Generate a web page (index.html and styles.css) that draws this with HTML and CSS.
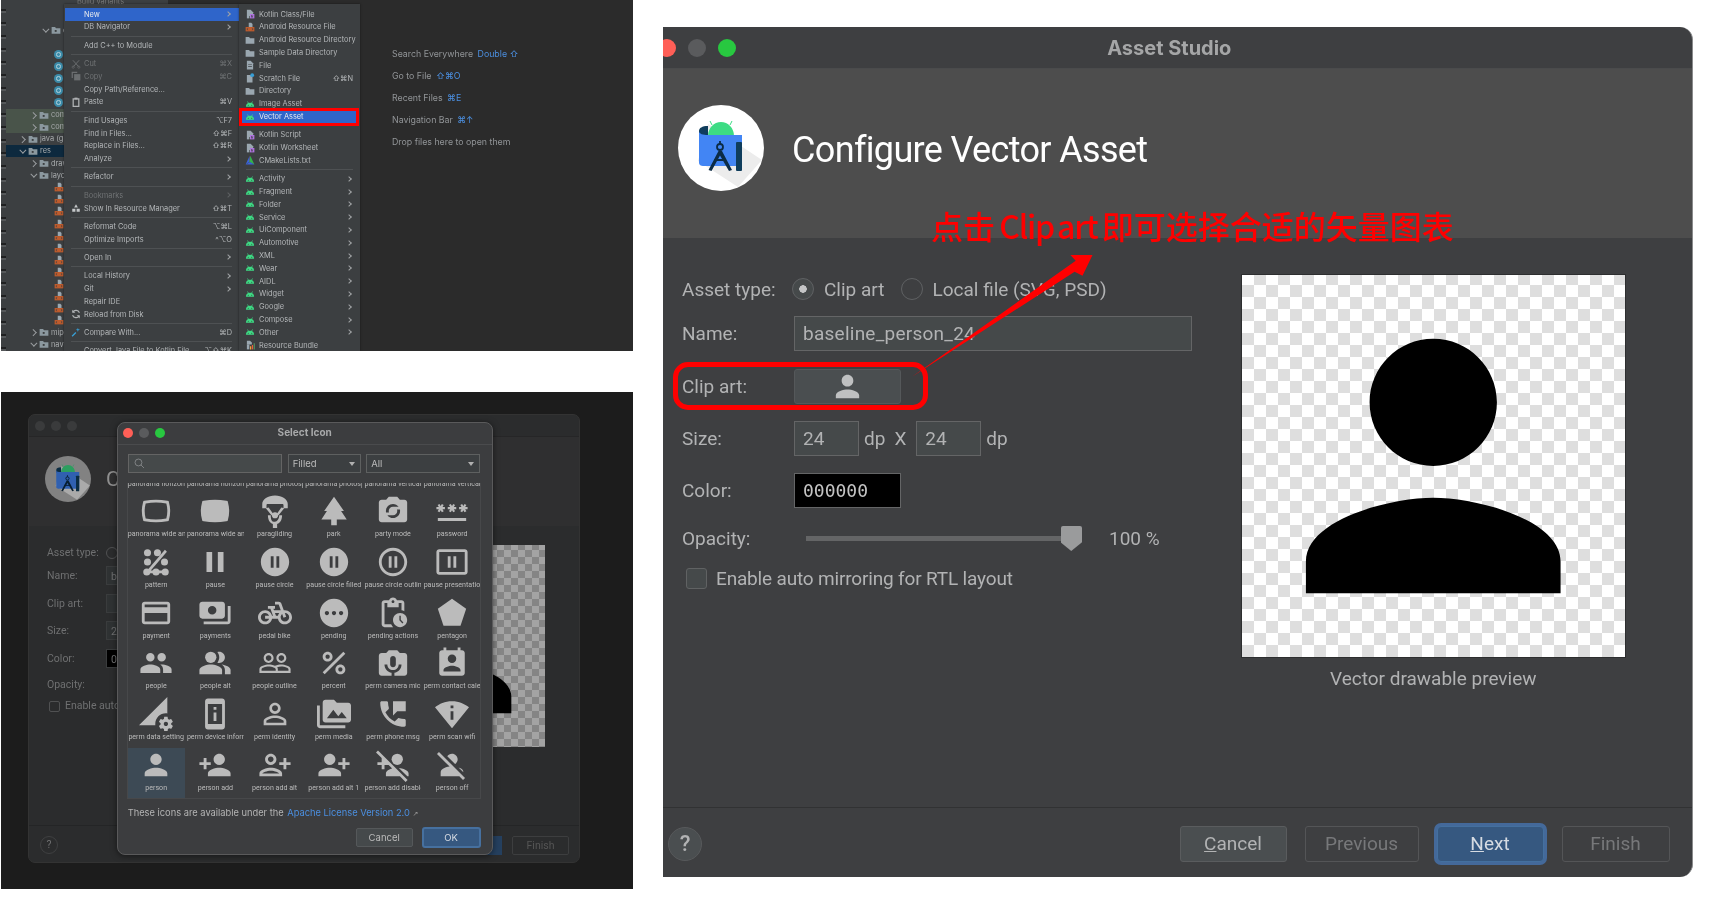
FILE: index.html
```html
<!DOCTYPE html>
<html lang="en">
<head>
    <meta charset="UTF-8">
    <title>Configure Vector Asset</title>
    <link rel="stylesheet" href="styles.css">
</head>
<body>
    <svg class="sprites" width="0" height="0">
        <symbol id="i-android" viewBox="0 0 16 16"><path fill="#3ddc84" d="M1.5 12.5a6.5 6.5 0 0 1 13 0z"/><path stroke="#3ddc84" stroke-width="1.2" d="M4 4l1.5 2.5M12 4l-1.5 2.5"/><circle cx="5.2" cy="10" r=".8" fill="#3c3f41"/><circle cx="10.8" cy="10" r=".8" fill="#3c3f41"/></symbol>
        <symbol id="i-folder" viewBox="0 0 16 16"><path fill="#9aa7b0" d="M1 3h5.5L8 5h7v9H1z"/></symbol>
        <symbol id="i-tfolder" viewBox="0 0 16 16"><path fill="#8b989f" d="M1 3h5.5L8 5h7v9H1z"/><rect x="6" y="8" width="3" height="3" fill="#3c3f41"/></symbol>
        <symbol id="i-file" viewBox="0 0 16 16"><path fill="#9aa7b0" d="M3 1h6l4 4v10H3z"/><path fill="#3c3f41" d="M5 7h6v1H5zM5 10h6v1H5z"/></symbol>
        <symbol id="i-kotlin" viewBox="0 0 16 16"><path fill="#9aa7b0" d="M3 1h6l4 4v6H3z"/><path fill="#9aa7b0" d="M3 11h4v4H3z"/><path fill="#b074e0" d="M8 8h7v7H8z"/><path fill="#3c3f41" d="M10 9.500h1v4h-1zM11 11.500l2-2v1l-1 1 1 2h-1z"/></symbol>
        <symbol id="i-xml" viewBox="0 0 16 16"><path fill="#9aa7b0" d="M6 1h4l2 2v5H6z"/><rect x="1" y="8" width="14" height="7" fill="#bd5b2d"/><path stroke="#3c3f41" fill="none" d="M5 10l-2 1.500L5 13M11 10l2 1.500L11 13"/></symbol>
        <symbol id="i-scratch" viewBox="0 0 16 16"><path fill="#9aa7b0" d="M3 3h6l3 3v9H3z"/><circle cx="11.500" cy="3.500" r="3" fill="#389fd6"/></symbol>
        <symbol id="i-cmake" viewBox="0 0 16 16"><path fill="#e23b3b" d="M8 1l-1 9 3 1z"/><path fill="#3a63d8" d="M7.500 1L1 15l6-4z"/><path fill="#34b24c" d="M8.500 1L15 15 7 11z"/><path fill="#3a63d8" d="M8 11L1 15h14z"/></symbol>
        <symbol id="i-bundle" viewBox="0 0 16 16"><path fill="#9aa7b0" d="M3 1h5l3 3v3H3z"/><path fill="#9aa7b0" d="M3 7h4v8H3z"/><path fill="#f2a43a" d="M8 10h2v5H8z"/><path fill="#e85d3a" d="M11 8h2v7h-2z"/><path fill="#59a869" d="M14 5h1.500v10H14z"/></symbol>
        <symbol id="i-person" viewBox="0 0 24 24"><path d="M12 12c2.210 0 4-1.790 4-4s-1.790-4-4-4-4 1.790-4 4 1.790 4 4 4zm0 2c-2.670 0-8 1.340-8 4v2h16v-2c0-2.660-5.330-4-8-4z"/></symbol>
        <symbol id="i-studio" viewBox="0 0 86 86">
            <path fill="#ececec" d="M30 19l54 36-24 27L20 56z"/>
            <path fill="#3ddc84" d="M30 31c0-8 6-14 13-14s13 6 13 14z"/>
            <path stroke="#3ddc84" stroke-width="1" d="M34 20l-2-4M52 20l2-4"/>
            <path fill="#0f3d5c" d="M21 26c0-3 3-5 9-5v10h-9z"/>
            <path fill="#4285f4" d="M21 26c0 3 4 4 9 4h34v31H25c-2 0-4-1-4-3z"/>
            <rect x="58" y="37" width="6" height="29" rx="1" fill="#0f3d5c"/>
            <path fill="#0b2b45" d="M40.500 46l-10 19 3 1 8.500-15.500L51 66l3-1-10-19z"/>
            <circle cx="42" cy="42" r="3" fill="none" stroke="#0b2b45" stroke-width="1.800"/>
            <path stroke="#0b2b45" stroke-width="1.800" d="M42 36v3M36 55h12"/>
        </symbol>
    </svg>

    <div class="page">
        <div class="left-col">
            <div class="ide">
                <div class="top-strip"><span>Build variants</span></div>
                <div class="tool-strip"></div>
                <div class="tree">
                    <div class="tree-row lv2"><i class="t-chev open"></i><svg class="t-ico"><use href="#i-tfolder"/></svg>com</div>
                    <div class="tree-row"></div>
                    <div class="tree-row lv3"><span class="c-badge"></span></div>
                    <div class="tree-row lv3"><span class="c-badge"></span></div>
                    <div class="tree-row lv3"><span class="c-badge"></span></div>
                    <div class="tree-row lv3"><span class="c-badge"></span></div>
                    <div class="tree-row lv3"><span class="c-badge"></span></div>
                    <div class="tree-row lv1b olive"><i class="t-chev"></i><svg class="t-ico"><use href="#i-tfolder"/></svg>com</div>
                    <div class="tree-row lv1b olive"><i class="t-chev"></i><svg class="t-ico"><use href="#i-tfolder"/></svg>com</div>
                    <div class="tree-row lv0"><i class="t-chev"></i><svg class="t-ico"><use href="#i-tfolder"/></svg>java (g</div>
                    <div class="tree-row lv0 picked"><i class="t-chev open"></i><svg class="t-ico"><use href="#i-tfolder"/></svg>res</div>
                    <div class="tree-row lv1b"><i class="t-chev"></i><svg class="t-ico"><use href="#i-tfolder"/></svg>drawable</div>
                    <div class="tree-row lv1b"><i class="t-chev open"></i><svg class="t-ico"><use href="#i-tfolder"/></svg>layout</div>
                    <div class="tree-row lv3"><svg class="t-ico"><use href="#i-xml"/></svg></div>
                    <div class="tree-row lv3"><svg class="t-ico"><use href="#i-xml"/></svg></div>
                    <div class="tree-row lv3"><svg class="t-ico"><use href="#i-xml"/></svg></div>
                    <div class="tree-row lv3"><svg class="t-ico"><use href="#i-xml"/></svg></div>
                    <div class="tree-row lv3"><svg class="t-ico"><use href="#i-xml"/></svg></div>
                    <div class="tree-row lv3"><svg class="t-ico"><use href="#i-xml"/></svg></div>
                    <div class="tree-row lv3"><svg class="t-ico"><use href="#i-xml"/></svg></div>
                    <div class="tree-row lv3"><svg class="t-ico"><use href="#i-xml"/></svg></div>
                    <div class="tree-row lv3"><svg class="t-ico"><use href="#i-xml"/></svg></div>
                    <div class="tree-row lv3"><svg class="t-ico"><use href="#i-xml"/></svg></div>
                    <div class="tree-row lv3"><svg class="t-ico"><use href="#i-xml"/></svg></div>
                    <div class="tree-row lv3"><svg class="t-ico"><use href="#i-xml"/></svg></div>
                    <div class="tree-row lv1b"><i class="t-chev"></i><svg class="t-ico"><use href="#i-tfolder"/></svg>mipmap</div>
                    <div class="tree-row lv1b"><i class="t-chev open"></i><svg class="t-ico"><use href="#i-tfolder"/></svg>navigation</div>
                </div>

                <div class="menu">
                    <div class="item active"><span class="ico"></span>New<i class="chev"></i></div>
                    <div class="item"><span class="ico"></span>DB Navigator<i class="chev"></i></div>
                    <div class="sep"></div>
                    <div class="item"><span class="ico"></span>Add C++ to Module</div>
                    <div class="sep"></div>
                    <div class="item off"><span class="ico"><svg class="m-ico" viewBox="0 0 16 16"><path fill="none" stroke="#6b6e70" stroke-width="1.500" d="M3 2l9 10M13 2L4 12"/><circle cx="3.500" cy="13" r="1.800" fill="none" stroke="#6b6e70"/><circle cx="12.500" cy="13" r="1.800" fill="none" stroke="#6b6e70"/></svg></span>Cut<span class="keys">⌘X</span></div>
                    <div class="item off"><span class="ico"><svg class="m-ico" viewBox="0 0 16 16"><path fill="#6b6e70" d="M1 1h9v2H3v8H1z"/><path fill="#6b6e70" d="M5 5h10v10H5z"/></svg></span>Copy<span class="keys">⌘C</span></div>
                    <div class="item"><span class="ico"></span>Copy Path/Reference...</div>
                    <div class="item"><span class="ico"><svg class="m-ico" viewBox="0 0 16 16"><path fill="none" stroke="#b0b3b5" stroke-width="2" d="M3.500 3h9v12h-9z"/><path fill="#b0b3b5" d="M5.500 1h5v3h-5z"/></svg></span>Paste<span class="keys">⌘V</span></div>
                    <div class="sep"></div>
                    <div class="item"><span class="ico"></span>Find Usages<span class="keys">⌥F7</span></div>
                    <div class="item"><span class="ico"></span>Find in Files...<span class="keys">⇧⌘F</span></div>
                    <div class="item"><span class="ico"></span>Replace in Files...<span class="keys">⇧⌘R</span></div>
                    <div class="item"><span class="ico"></span>Analyze<i class="chev"></i></div>
                    <div class="sep"></div>
                    <div class="item"><span class="ico"></span>Refactor<i class="chev"></i></div>
                    <div class="sep"></div>
                    <div class="item off"><span class="ico"></span>Bookmarks<i class="chev"></i></div>
                    <div class="item"><span class="ico"><svg class="m-ico" viewBox="0 0 16 16"><path fill="#c4c7c9" d="M8 2l3 5H5zM2 9h5v5H2zM9 9h5v5H9z"/></svg></span>Show In Resource Manager<span class="keys">⇧⌘T</span></div>
                    <div class="sep"></div>
                    <div class="item"><span class="ico"></span>Reformat Code<span class="keys">⌥⌘L</span></div>
                    <div class="item"><span class="ico"></span>Optimize Imports<span class="keys">^⌥O</span></div>
                    <div class="sep"></div>
                    <div class="item"><span class="ico"></span>Open In<i class="chev"></i></div>
                    <div class="sep"></div>
                    <div class="item"><span class="ico"></span>Local History<i class="chev"></i></div>
                    <div class="item"><span class="ico"></span>Git<i class="chev"></i></div>
                    <div class="item"><span class="ico"></span>Repair IDE</div>
                    <div class="item"><span class="ico"><svg class="m-ico" viewBox="0 0 16 16"><path fill="none" stroke="#b0b3b5" stroke-width="1.800" d="M13.500 6A6 6 0 0 0 2.800 5M2.500 10a6 6 0 0 0 10.700 1"/><path fill="#b0b3b5" d="M2 1v5h5zM14 15v-5H9z"/></svg></span>Reload from Disk</div>
                    <div class="sep"></div>
                    <div class="item"><span class="ico"><svg class="m-ico" viewBox="0 0 16 16"><path fill="#389fd6" d="M1 14L7 8l1.500 1.500-6 6zM11 1l.8 2.700 2.700.8-2.700.8L11 8l-.8-2.700L7.500 4.500l2.700-.8z"/></svg></span>Compare With...<span class="keys">⌘D</span></div>
                    <div class="sep"></div>
                    <div class="item"><span class="ico"></span>Convert Java File to Kotlin File<span class="keys">⌥⇧⌘K</span></div>
                </div>

                <div class="menu sub">
                    <div class="item"><span class="ico"><svg class="m-ico"><use href="#i-kotlin"/></svg></span>Kotlin Class/File</div>
                    <div class="item"><span class="ico"><svg class="m-ico"><use href="#i-xml"/></svg></span>Android Resource File</div>
                    <div class="item"><span class="ico"><svg class="m-ico"><use href="#i-folder"/></svg></span>Android Resource Directory</div>
                    <div class="item"><span class="ico"><svg class="m-ico"><use href="#i-folder"/></svg></span>Sample Data Directory</div>
                    <div class="item"><span class="ico"><svg class="m-ico"><use href="#i-file"/></svg></span>File</div>
                    <div class="item"><span class="ico"><svg class="m-ico"><use href="#i-scratch"/></svg></span>Scratch File<span class="keys">⇧⌘N</span></div>
                    <div class="item"><span class="ico"><svg class="m-ico"><use href="#i-folder"/></svg></span>Directory</div>
                    <div class="item"><span class="ico"><svg class="m-ico"><use href="#i-android"/></svg></span>Image Asset</div>
                    <div class="item active"><span class="ico"><svg class="m-ico"><use href="#i-android"/></svg></span>Vector Asset</div>
                    <div class="sep"></div>
                    <div class="item"><span class="ico"><svg class="m-ico"><use href="#i-kotlin"/></svg></span>Kotlin Script</div>
                    <div class="item"><span class="ico"><svg class="m-ico"><use href="#i-kotlin"/></svg></span>Kotlin Worksheet</div>
                    <div class="item"><span class="ico"><svg class="m-ico"><use href="#i-cmake"/></svg></span>CMakeLists.txt</div>
                    <div class="sep"></div>
                    <div class="item"><span class="ico"><svg class="m-ico"><use href="#i-android"/></svg></span>Activity<i class="chev"></i></div>
                    <div class="item"><span class="ico"><svg class="m-ico"><use href="#i-android"/></svg></span>Fragment<i class="chev"></i></div>
                    <div class="item"><span class="ico"><svg class="m-ico"><use href="#i-android"/></svg></span>Folder<i class="chev"></i></div>
                    <div class="item"><span class="ico"><svg class="m-ico"><use href="#i-android"/></svg></span>Service<i class="chev"></i></div>
                    <div class="item"><span class="ico"><svg class="m-ico"><use href="#i-android"/></svg></span>UiComponent<i class="chev"></i></div>
                    <div class="item"><span class="ico"><svg class="m-ico"><use href="#i-android"/></svg></span>Automotive<i class="chev"></i></div>
                    <div class="item"><span class="ico"><svg class="m-ico"><use href="#i-android"/></svg></span>XML<i class="chev"></i></div>
                    <div class="item"><span class="ico"><svg class="m-ico"><use href="#i-android"/></svg></span>Wear<i class="chev"></i></div>
                    <div class="item"><span class="ico"><svg class="m-ico"><use href="#i-android"/></svg></span>AIDL<i class="chev"></i></div>
                    <div class="item"><span class="ico"><svg class="m-ico"><use href="#i-android"/></svg></span>Widget<i class="chev"></i></div>
                    <div class="item"><span class="ico"><svg class="m-ico"><use href="#i-android"/></svg></span>Google<i class="chev"></i></div>
                    <div class="item"><span class="ico"><svg class="m-ico"><use href="#i-android"/></svg></span>Compose<i class="chev"></i></div>
                    <div class="item"><span class="ico"><svg class="m-ico"><use href="#i-android"/></svg></span>Other<i class="chev"></i></div>
                    <div class="item"><span class="ico"><svg class="m-ico"><use href="#i-bundle"/></svg></span>Resource Bundle</div>
                </div>

                <div class="hints">
                    <div>Search Everywhere <b>Double ⇧</b></div>
                    <div>Go to File <b>⇧⌘O</b></div>
                    <div>Recent Files <b>⌘E</b></div>
                    <div>Navigation Bar <b>⌘↑</b></div>
                    <div>Drop files here to open them</div>
                </div>

                <div class="ide-ring"></div>
            </div>

            <div class="shot">
                <div class="dim">
                    <div class="dim-title">
                        <i></i><i></i><i></i>
                    </div>
                    <div class="dim-head">
                        <svg class="dim-logo"><use href="#i-studio"/></svg>
                        <span>Configure Vector Asset</span>
                    </div>
                    <div class="dim-body">
                        <div class="dim-form">
                            <span>Asset type:</span><i class="dim-radio"></i>
                            <span>Name:</span><i class="dim-field">b</i>
                            <span>Clip art:</span><i class="dim-field"></i>
                            <span>Size:</span><i class="dim-field">2</i>
                            <span>Color:</span><i class="dim-field black">0</i>
                            <span>Opacity:</span><i></i>
                            <span class="dim-check"><i></i>Enable auto mirroring</span>
                        </div>
                        <div class="dim-preview-col">
                            <div class="dim-preview"><svg class="preview-art" viewBox="0 0 24 24"><use href="#i-person"/></svg></div>
                            <span>Vector drawable preview</span>
                        </div>
                    </div>
                    <div class="dim-foot">
                        <span class="dim-help">?</span>
                        <span class="dim-next">Next</span>
                        <span class="dim-finish">Finish</span>
                    </div>
                </div>

                <div class="picker">
                    <div class="picker-title">
                        <i class="dot red"></i><i class="dot gray"></i><i class="dot green"></i>
                        <span>Select Icon</span>
                    </div>
                    <div class="picker-tools">
                        <div class="search"><svg viewBox="0 0 16 16"><circle cx="6.500" cy="6.500" r="5" fill="none" stroke="#8a8d8f" stroke-width="1.200"/><path stroke="#8a8d8f" stroke-width="1.200" d="M10 10l4.500 4.500"/></svg></div>
                        <div class="combo filled">Filled<i></i></div>
                        <div class="combo all">All<i></i></div>
                    </div>
                    <div class="icon-box">
                        <div class="cut-row">
                            <span>panorama horizontal</span><span>panorama horizontal</span><span>panorama photosphere</span><span>panorama photosphere</span><span>panorama vertical</span><span>panorama vertical</span>
                        </div>
                        <div class="icon-grid">
                            <div class="cell"><svg viewBox="0 0 24 24"><path d="M12 6c2.450 0 4.710.2 7.290.64.47 1.780.71 3.580.71 5.360 0 1.780-.24 3.580-.71 5.360-2.580.44-4.840.64-7.290.64s-4.710-.2-7.290-.64C4.240 15.580 4 13.780 4 12c0-1.780.24-3.580.71-5.360C7.290 6.200 9.550 6 12 6m0-2c-2.730 0-5.220.24-7.950.72l-.93.16-.25.9C2.290 7.850 2 9.930 2 12s.29 4.150.87 6.220l.25.89.93.16c2.730.49 5.220.73 7.950.73s5.220-.24 7.950-.72l.93-.16.25-.89c.58-2.080.87-4.160.87-6.230s-.29-4.150-.87-6.220l-.25-.89-.93-.16C17.220 4.240 14.730 4 12 4z"/></svg><span>panorama wide angle</span></div>
                            <div class="cell"><svg viewBox="0 0 24 24"><path d="M12 4C9.270 4 6.780 4.240 4.050 4.720l-.93.16-.25.9C2.290 7.850 2 9.930 2 12s.29 4.150.87 6.220l.25.89.93.16c2.730.49 5.220.73 7.950.73s5.220-.24 7.950-.72l.93-.16.25-.89c.58-2.080.87-4.160.87-6.230s-.29-4.150-.87-6.220l-.25-.89-.93-.16C17.220 4.240 14.730 4 12 4z"/></svg><span>panorama wide angle</span></div>
                            <div class="cell"><svg viewBox="0 0 24 24"><path d="M12 1C7 1 3 3.600 3 7v3h3V7.800c0-.4.3-.8.8-.8h10.400c.5 0 .8.4.8.8V10h3V7c0-3.400-4-6-9-6z"/><path d="M5.500 10l4 5 1.300-.8L7.500 9.500zM18.500 10l-4 5-1.300-.8 3.300-4.700z"/><circle cx="12" cy="15" r="2.200"/><path d="M7 15c0 3.500 1.500 5.500 3.500 6.200V24h3v-2.800c2-.7 3.500-2.700 3.500-6.200h-2c0 2.500-1.500 4.500-3 4.500h-1C9.500 19.500 9 17.500 9 15z"/></svg><span>paragliding</span></div>
                            <div class="cell"><svg viewBox="0 0 24 24"><path d="M17 12h2L12 2 5.050 12H7l-3.900 6h6.920v4h3.950v-4H21z"/></svg><span>park</span></div>
                            <div class="cell"><svg viewBox="0 0 24 24"><path d="M20 4h-3.170L15 2H9L7.170 4H4c-1.100 0-2 .9-2 2v12c0 1.100.9 2 2 2h16c1.100 0 2-.9 2-2V6c0-1.100-.9-2-2-2zm-8 3c1.630 0 3.060.79 3.980 2H12c-1.660 0-3 1.340-3 3 0 .35.07.69.18 1H7.100c-.06-.32-.1-.66-.1-1 0-2.760 2.240-5 5-5zm0 10c-1.630 0-3.060-.79-3.980-2H12c1.660 0 3-1.340 3-3 0-.35-.07-.69-.18-1h2.080c.07.32.1.66.1 1 0 2.760-2.240 5-5 5z"/></svg><span>party mode</span></div>
                            <div class="cell"><svg viewBox="0 0 24 24"><path d="M2 17h20v2H2zm1.150-4.050L4 11.470l.85 1.480 1.300-.75-.85-1.480H7v-1.500H5.300l.85-1.470L4.850 7 4 8.470 3.150 7l-1.300.75.85 1.470H1v1.500h1.700l-.85 1.480 1.300.75zm6.700-.75l1.300.75.85-1.480.85 1.480 1.300-.75-.85-1.480H15v-1.500h-1.700l.85-1.470-1.300-.75L12 8.470 11.150 7l-1.300.75.85 1.470H9v1.500h1.700l-.85 1.480zM23 9.220h-1.700l.85-1.470-1.300-.75L20 8.470 19.150 7l-1.300.75.85 1.470H17v1.500h1.700l-.85 1.480 1.300.75.85-1.480.85 1.480 1.300-.75-.85-1.480H23v-1.500z"/></svg><span>password</span></div>

                            <div class="cell"><svg viewBox="0 0 24 24"><circle cx="6" cy="5.500" r="2.500"/><circle cx="13" cy="5.500" r="2.500"/><circle cx="6" cy="12" r="2.500"/><circle cx="18" cy="12" r="2.500"/><circle cx="5.500" cy="19" r="2.500"/><circle cx="12" cy="19" r="2.500"/><circle cx="18.500" cy="19" r="2.500"/><path d="M5 18h14v2H5zM18.300 3.300l1.400 1.400L7.700 18.700l-1.400-1.400z"/></svg><span>pattern</span></div>
                            <div class="cell"><svg viewBox="0 0 24 24"><path d="M6 19h4V5H6v14zm8-14v14h4V5h-4z"/></svg><span>pause</span></div>
                            <div class="cell"><svg viewBox="0 0 24 24"><path d="M12 2C6.480 2 2 6.480 2 12s4.480 10 10 10 10-4.480 10-10S17.520 2 12 2zm-1 14H9V8h2v8zm4 0h-2V8h2v8z"/></svg><span>pause circle</span></div>
                            <div class="cell"><svg viewBox="0 0 24 24"><path d="M12 2C6.480 2 2 6.480 2 12s4.480 10 10 10 10-4.480 10-10S17.520 2 12 2zm-1 14H9V8h2v8zm4 0h-2V8h2v8z"/></svg><span>pause circle filled</span></div>
                            <div class="cell"><svg viewBox="0 0 24 24"><path d="M9 16h2V8H9v8zm3-14C6.480 2 2 6.480 2 12s4.480 10 10 10 10-4.480 10-10S17.520 2 12 2zm0 18c-4.410 0-8-3.590-8-8s3.590-8 8-8 8 3.590 8 8-3.590 8-8 8zm1-4h2V8h-2v8z"/></svg><span>pause circle outline</span></div>
                            <div class="cell"><svg viewBox="0 0 24 24"><path d="M21 3H3c-1.100 0-2 .9-2 2v14c0 1.100.9 2 2 2h18c1.100 0 2-.9 2-2V5c0-1.100-.9-2-2-2zm0 16H3V5h18v14zM9 8h2v8H9zm4 0h2v8h-2z"/></svg><span>pause presentation</span></div>

                            <div class="cell"><svg viewBox="0 0 24 24"><path d="M20 4H4c-1.110 0-1.990.89-1.990 2L2 18c0 1.110.89 2 2 2h16c1.110 0 2-.89 2-2V6c0-1.110-.89-2-2-2zm0 14H4v-6h16v6zm0-10H4V6h16v2z"/></svg><span>payment</span></div>
                            <div class="cell"><svg viewBox="0 0 24 24"><path d="M19 14V6c0-1.100-.9-2-2-2H3c-1.100 0-2 .9-2 2v8c0 1.100.9 2 2 2h14c1.100 0 2-.9 2-2zm-9-1c-1.660 0-3-1.340-3-3s1.340-3 3-3 3 1.340 3 3-1.340 3-3 3zm13-6v11c0 1.100-.9 2-2 2H4v-2h17V7h2z"/></svg><span>payments</span></div>
                            <div class="cell"><svg viewBox="0 0 24 24"><path d="M18.180 10l-1.700-4.680C16.190 4.530 15.440 4 14.600 4H12v2h2.600l1.460 4h-4.810l-.36-1H12V7H7v2h1.750l1.820 5H9.900c-.44-2.230-2.310-3.880-4.650-3.990C2.450 9.870 0 12.200 0 15c0 2.800 2.200 5 5 5 2.460 0 4.450-1.690 4.900-4h4.200c.44 2.230 2.310 3.880 4.650 3.990 2.800.13 5.250-2.190 5.250-5 0-2.800-2.200-5-5-5h-.82zM7.820 16c-.4 1.170-1.490 2-2.820 2-1.680 0-3-1.320-3-3s1.320-3 3-3c1.330 0 2.420.83 2.820 2H5v2h2.820zm6.280-2h-1.400l-.73-2H15c-.44.58-.76 1.250-.9 2zm4.900 4c-1.680 0-3-1.320-3-3 0-.93.41-1.730 1.050-2.280l.96 2.640 1.880-.68-.97-2.670c.03 0 .06-.01.09-.01 1.680 0 3 1.320 3 3s-1.330 3-3.010 3z"/></svg><span>pedal bike</span></div>
                            <div class="cell"><svg viewBox="0 0 24 24"><path d="M12 2C6.480 2 2 6.480 2 12s4.480 10 10 10 10-4.480 10-10S17.520 2 12 2zM7 13.500c-.83 0-1.500-.67-1.500-1.500s.67-1.500 1.500-1.500 1.500.67 1.500 1.500-.67 1.500-1.500 1.500zm5 0c-.83 0-1.500-.67-1.500-1.500s.67-1.500 1.500-1.500 1.500.67 1.500 1.500-.67 1.500-1.500 1.500zm5 0c-.83 0-1.500-.67-1.500-1.500s.67-1.500 1.500-1.500 1.500.67 1.500 1.500-.67 1.500-1.500 1.500z"/></svg><span>pending</span></div>
                            <div class="cell"><svg viewBox="0 0 24 24"><path d="M17 12c-2.760 0-5 2.240-5 5s2.240 5 5 5 5-2.240 5-5-2.240-5-5-5zm1.650 7.350L16.500 17.200V14h1v2.790l1.850 1.850-.7.71zM18 3h-3.180C14.400 1.840 13.300 1 12 1s-2.400.84-2.820 2H6c-1.100 0-2 .9-2 2v15c0 1.100.9 2 2 2h6.110c-.59-.57-1.070-1.250-1.420-2H6V5h2v3h8V5h2v5.080c.71.1 1.380.31 2 .6V5c0-1.100-.9-2-2-2zm-6 2c-.55 0-1-.45-1-1s.45-1 1-1 1 .45 1 1-.45 1-1 1z"/></svg><span>pending actions</span></div>
                            <div class="cell"><svg viewBox="0 0 24 24"><path d="M2 9l4 12h12l4-12-10-7z"/></svg><span>pentagon</span></div>

                            <div class="cell"><svg viewBox="0 0 24 24"><path d="M16 11c1.660 0 2.990-1.340 2.990-3S17.660 5 16 5c-1.660 0-3 1.340-3 3s1.340 3 3 3zm-8 0c1.660 0 2.990-1.340 2.990-3S9.660 5 8 5C6.340 5 5 6.340 5 8s1.340 3 3 3zm0 2c-2.330 0-7 1.170-7 3.500V19h14v-2.500c0-2.330-4.670-3.500-7-3.500zm8 0c-.29 0-.62.02-.97.05 1.160.84 1.970 1.970 1.970 3.450V19h6v-2.500c0-2.330-4.670-3.500-7-3.500z"/></svg><span>people</span></div>
                            <div class="cell"><svg viewBox="0 0 24 24"><path d="M16.670 13.130C18.040 14.060 19 15.320 19 17v3h4v-3c0-2.180-3.570-3.470-6.330-3.870z"/><circle cx="9" cy="8" r="4"/><path d="M15 12c2.210 0 4-1.790 4-4s-1.790-4-4-4c-.47 0-.91.1-1.330.24C14.500 5.270 15 6.580 15 8s-.5 2.730-1.330 3.760c.42.14.86.24 1.330.24zM9 13c-2.670 0-8 1.340-8 4v3h16v-3c0-2.660-5.330-4-8-4z"/></svg><span>people alt</span></div>
                            <div class="cell"><svg viewBox="0 0 24 24"><path d="M16.500 13c-1.200 0-3.070.34-4.500 1-1.430-.67-3.300-1-4.500-1C5.330 13 1 14.080 1 16.250V19h22v-2.750c0-2.170-4.330-3.250-6.500-3.250zm-4 4.500h-10v-1.250c0-.54 2.560-1.750 5-1.750s5 1.210 5 1.750v1.250zm9 0H14v-1.250c0-.46-.2-.86-.52-1.220.88-.3 1.960-.53 3.020-.53 2.440 0 5 1.210 5 1.750v1.250zM7.500 12c1.930 0 3.500-1.570 3.500-3.500S9.430 5 7.500 5 4 6.570 4 8.500 5.570 12 7.500 12zm0-5.500c1.100 0 2 .9 2 2s-.9 2-2 2-2-.9-2-2 .9-2 2-2zm9 5.500c1.930 0 3.500-1.570 3.500-3.500S18.430 5 16.500 5 13 6.570 13 8.500s1.570 3.500 3.500 3.500zm0-5.500c1.100 0 2 .9 2 2s-.9 2-2 2-2-.9-2-2 .9-2 2-2z"/></svg><span>people outline</span></div>
                            <div class="cell"><svg viewBox="0 0 24 24"><path d="M7.500 11C9.430 11 11 9.430 11 7.500S9.430 4 7.500 4 4 5.570 4 7.500 5.570 11 7.500 11zm0-5C8.330 6 9 6.670 9 7.500S8.330 9 7.500 9 6 8.330 6 7.500 6.670 6 7.500 6zM4.002 18.583 18.590 3.995l1.414 1.414L5.417 19.997zM16.500 13c-1.930 0-3.500 1.570-3.500 3.500s1.570 3.500 3.500 3.500 3.500-1.570 3.500-3.500-1.570-3.500-3.500-3.500zm0 5c-.83 0-1.500-.67-1.500-1.500s.67-1.500 1.500-1.500 1.500.67 1.500 1.500-.67 1.500-1.500 1.500z"/></svg><span>percent</span></div>
                            <div class="cell"><svg viewBox="0 0 24 24"><path d="M20 5h-3.170L15 3H9L7.170 5H4c-1.100 0-2 .9-2 2v12c0 1.100.9 2 2 2h7v-2.090c-2.830-.48-5-2.940-5-5.910h2c0 2.210 1.790 4 4 4s4-1.790 4-4h2c0 2.970-2.170 5.430-5 5.910V21h7c1.100 0 2-.9 2-2V7c0-1.100-.9-2-2-2zm-6 8c0 1.100-.9 2-2 2s-2-.9-2-2V9c0-1.100.9-2 2-2s2 .9 2 2v4z"/></svg><span>perm camera mic</span></div>
                            <div class="cell"><svg viewBox="0 0 24 24"><path d="M19 3h-1V1h-2v2H8V1H6v2H5c-1.110 0-2 .9-2 2v14c0 1.100.89 2 2 2h14c1.100 0 2-.9 2-2V5c0-1.100-.9-2-2-2zm-7 3c1.660 0 3 1.340 3 3s-1.340 3-3 3-3-1.340-3-3 1.340-3 3-3zm6 12H6v-1c0-2 4-3.100 6-3.100s6 1.100 6 3.100v1z"/></svg><span>perm contact calendar</span></div>

                            <div class="cell"><svg viewBox="0 0 24 24"><path d="M18.990 11.500c.34 0 .67.03 1 .07L20 0 0 20h11.560c-.04-.33-.07-.66-.07-1 0-4.140 3.360-7.500 7.500-7.500zm3.710 7.990c.02-.16.04-.32.04-.49 0-.17-.01-.33-.04-.49l1.060-.83c.09-.08.12-.21.06-.32l-1-1.730c-.06-.11-.19-.15-.31-.11l-1.240.5c-.26-.2-.54-.37-.85-.49l-.19-1.320c-.01-.12-.12-.21-.24-.21h-2c-.12 0-.23.09-.25.21l-.19 1.320c-.3.13-.59.29-.85.49l-1.240-.5c-.11-.04-.24 0-.31.11l-1 1.730c-.06.11-.04.24.06.32l1.060.83c-.02.16-.03.32-.03.49 0 .17.01.33.03.49l-1.060.83c-.09.08-.12.21-.06.32l1 1.730c.06.11.19.15.31.11l1.240-.5c.26.2.54.37.85.49l.19 1.320c.02.12.12.21.25.21h2c.12 0 .23-.09.25-.21l.19-1.320c.3-.13.59-.29.84-.49l1.250.5c.11.04.24 0 .31-.11l1-1.730c.06-.11.03-.24-.06-.32l-1.070-.83zm-3.710 1.010c-.83 0-1.500-.67-1.500-1.500s.67-1.500 1.500-1.500 1.500.67 1.500 1.500-.67 1.500-1.500 1.500z"/></svg><span>perm data setting</span></div>
                            <div class="cell"><svg viewBox="0 0 24 24"><path d="M13 7h-2v2h2V7zm0 4h-2v6h2v-6zm4-9.990L7 1c-1.100 0-2 .9-2 2v18c0 1.100.9 2 2 2h10c1.100 0 2-.9 2-2V3c0-1.100-.9-1.990-2-1.990zM17 19H7V5h10v14z"/></svg><span>perm device information</span></div>
                            <div class="cell"><svg viewBox="0 0 24 24"><path d="M12 5.900c1.160 0 2.100.94 2.100 2.100s-.94 2.100-2.100 2.100S9.900 9.160 9.900 8s.94-2.100 2.100-2.100m0 9c2.970 0 6.100 1.460 6.100 2.100v1.100H5.900V17c0-.64 3.130-2.100 6.100-2.100M12 4C9.790 4 8 5.790 8 8s1.790 4 4 4 4-1.790 4-4-1.790-4-4-4zm0 9c-2.670 0-8 1.340-8 4v3h16v-3c0-2.660-5.330-4-8-4z"/></svg><span>perm identity</span></div>
                            <div class="cell"><svg viewBox="0 0 24 24"><path d="M2 6H0v5h.01L0 20c0 1.100.9 2 2 2h18v-2H2V6zm20-2h-8l-2-2H6c-1.100 0-1.990.9-1.990 2L4 16c0 1.100.9 2 2 2h16c1.100 0 2-.9 2-2V6c0-1.100-.9-2-2-2zM7 15l4.500-6 3.500 4.510 2.500-3.010L21 15H7z"/></svg><span>perm media</span></div>
                            <div class="cell"><svg viewBox="0 0 24 24"><path d="M20 15.500c-1.250 0-2.450-.2-3.570-.57-.35-.11-.74-.03-1.020.24l-2.200 2.200c-2.830-1.440-5.150-3.750-6.590-6.580l2.200-2.210c.28-.27.36-.66.25-1.010C8.700 6.450 8.500 5.250 8.500 4c0-.55-.45-1-1-1H4c-.55 0-1 .45-1 1 0 9.390 7.610 17 17 17 .55 0 1-.45 1-1v-3.500c0-.55-.45-1-1-1zM12 3v10l3-3h6V3h-9z"/></svg><span>perm phone msg</span></div>
                            <div class="cell"><svg viewBox="0 0 24 24"><path d="M12 3C6.950 3 3.150 4.850 0 7.230L12 22 24 7.250C20.850 4.870 17.050 3 12 3zm1 13h-2v-6h2v6zm-2-8V6h2v2h-2z"/></svg><span>perm scan wifi</span></div>

                            <div class="cell chosen"><svg viewBox="0 0 24 24"><use href="#i-person"/></svg><span>person</span></div>
                            <div class="cell"><svg viewBox="0 0 24 24"><path d="M15 12c2.210 0 4-1.790 4-4s-1.790-4-4-4-4 1.790-4 4 1.790 4 4 4zm-9-2V7H4v3H1v2h3v3h2v-3h3v-2H6zm9 4c-2.670 0-8 1.340-8 4v2h16v-2c0-2.660-5.330-4-8-4z"/></svg><span>person add</span></div>
                            <div class="cell"><svg viewBox="0 0 24 24"><path d="M13 8c0-2.210-1.790-4-4-4S5 5.790 5 8s1.790 4 4 4 4-1.790 4-4zm-2 0c0 1.100-.9 2-2 2s-2-.9-2-2 .9-2 2-2 2 .9 2 2zM1 18v2h16v-2c0-2.660-5.330-4-8-4s-8 1.340-8 4zm2 0c.2-.71 3.300-2 6-2 2.690 0 5.780 1.280 6 2H3zM20 15v-3h3v-2h-3V7h-2v3h-3v2h3v3h2z"/></svg><span>person add alt</span></div>
                            <div class="cell"><svg viewBox="0 0 24 24"><path d="M13 8c0-2.210-1.790-4-4-4S5 5.790 5 8s1.790 4 4 4 4-1.790 4-4zm2 2v2h3v3h2v-3h3v-2h-3V7h-2v3h-3zM1 18v2h16v-2c0-2.660-5.330-4-8-4s-8 1.340-8 4z"/></svg><span>person add alt 1</span></div>
                            <div class="cell"><svg viewBox="0 0 24 24"><circle cx="15" cy="8" r="4"/><path d="M23 20v-2c0-2.300-4.100-3.700-6.900-3.900l6 5.900H23zM1.410 1.690L0 3.100l4 4V10H1v2h3v3h2v-3h2.900l2.540 2.540C9.300 15.100 7 16.300 7 18v2h9.900l3.990 3.990 1.410-1.410z"/></svg><span>person add disabled</span></div>
                            <div class="cell"><svg viewBox="0 0 24 24"><path d="M8.650 5.820C9.360 4.720 10.600 4 12 4c2.210 0 4 1.790 4 4 0 1.400-.72 2.640-1.820 3.350L8.650 5.820zM20 17.170c-.02-1.100-.63-2.110-1.610-2.620-.54-.28-1.130-.54-1.770-.76L20 17.170zm1.190 4.020L2.810 2.810 1.390 4.220l8.890 8.890c-1.810.23-3.390.79-4.670 1.450C4.610 15.070 4 16.100 4 17.220V20h13.170l2.610 2.610 1.410-1.420z"/></svg><span>person off</span></div>
                        </div>
                    </div>
                    <div class="license">These icons are available under the <a>Apache License Version 2.0</a> <span class="ext">↗</span></div>
                    <div class="picker-buttons">
                        <span class="p-btn">Cancel</span>
                        <span class="p-btn ok">OK</span>
                    </div>
                </div>
            </div>
        </div>

        <div class="asset">
            <div class="title-bar">
                <i class="light red"></i><i class="light gray"></i><i class="light green"></i>
                <span class="title-text">Asset Studio</span>
            </div>
            <div class="head">
                <svg class="logo"><use href="#i-studio"/></svg>
                <h1>Configure Vector Asset</h1>
            </div>
            <div class="body">
                <div class="form">
                    <div class="row type-row">
                        <label>Asset type:</label>
                        <i class="radio on"></i><span>Clip art</span>
                        <i class="radio second"></i><span>Local file (SVG, PSD)</span>
                    </div>
                    <div class="row name-row">
                        <label>Name:</label>
                        <div class="field name-field">baseline_person_24</div>
                    </div>
                    <div class="row">
                        <label>Clip art:</label>
                        <div class="clip-btn"><svg viewBox="0 0 24 24"><use href="#i-person"/></svg></div>
                    </div>
                    <div class="row">
                        <label>Size:</label>
                        <div class="field size-field">24</div><span class="unit">dp</span><span class="unit x">X</span>
                        <div class="field size-field">24</div><span class="unit">dp</span>
                    </div>
                    <div class="row">
                        <label>Color:</label>
                        <div class="field color-field">000000</div>
                    </div>
                    <div class="row opacity-row">
                        <label>Opacity:</label>
                        <div class="slider"><i class="track"></i><i class="thumb"></i></div>
                        <span class="percent">100 %</span>
                    </div>
                    <div class="row check-row">
                        <i class="check"></i><span>Enable auto mirroring for RTL layout</span>
                    </div>
                </div>
                <div class="preview-col">
                    <div class="preview"><svg class="preview-art" viewBox="0 0 24 24"><use href="#i-person"/></svg></div>
                    <div class="caption">Vector drawable preview</div>
                </div>
            </div>
            <div class="footer">
                <span class="help">?</span>
                <div class="buttons">
                    <span class="btn"><u>C</u>ancel</span>
                    <span class="btn disabled">Previous</span>
                    <span class="btn primary"><u>N</u>ext</span>
                    <span class="btn disabled">Finish</span>
                </div>
            </div>

            <div class="callout">点击 <span>Clip art</span> 即可选择合适的矢量图表</div>
            <div class="clip-ring"></div>
            <svg class="arrow" viewBox="0 0 1029 850"><path fill="#f00" d="M429.500 228L407.400 228L412.700 233.700L249 349.700L411.600 244.700L419.500 248.700z"/></svg>
        </div>
    </div>
</body>
</html>
```

FILE: styles.css
```css
* {
    margin: 0;
    padding: 0;
    box-sizing: border-box;
}

html, body {
    height: 100%;
    overflow: hidden;
}

body {
    background: #fff;
    font-family: Inter, "Noto Sans CJK SC", sans-serif;
}

i {
    font-style: normal;
}

.sprites {
    display: block;
    height: 0;
}

.page {
    display: flex;
    gap: 30px;
    padding-left: 1px;
    align-items: flex-start;
}

.left-col {
    width: 632px;
    display: flex;
    flex-direction: column;
    gap: 41px;
}

/* IDE screenshot, top left */
.ide {
    position: relative;
    display: flex;
    height: 351px;
    overflow: hidden;
    background: #2b2b2b;
    font-size: 7.4px;
    color: #b4b7b9;
    filter: blur(.3px);
}

.top-strip {
    position: absolute;
    top: 0;
    left: 0;
    width: 167px;
    height: 5px;
    background: #3c3f41;
    overflow: hidden;
}

.top-strip span {
    display: block;
    margin: -3px 0 0 76px;
    color: #777;
}

.tool-strip {
    flex: none;
    width: 5px;
    background: repeating-linear-gradient(#3c3f41 0 9px, #1f2021 9px 11px, #55585a 11px 13px);
}

.tree {
    position: relative;
    flex: none;
    width: 58px;
    padding-top: 24px;
    background: #3c3f41;
    overflow: hidden;
    color: #a9acae;
}

.tree-row {
    display: flex;
    align-items: center;
    height: 12.1px;
    white-space: nowrap;
}

.tree-row.lv0 { padding-left: 13px; }
.tree-row.lv1b { padding-left: 24px; }
.tree-row.lv2 { padding-left: 36px; }
.tree-row.lv3 { padding-left: 47px; }
.tree-row.olive { background: #49544a; }
.tree-row.picked { background: #0d293e; }

.t-chev {
    flex: none;
    width: 8px;
    height: 8px;
    position: relative;
}

.t-chev::after {
    content: '';
    position: absolute;
    left: 1px;
    top: 2px;
    width: 3.500px;
    height: 3.500px;
    border-top: 1px solid #9a9da0;
    border-right: 1px solid #9a9da0;
    transform: rotate(45deg);
}

.t-chev.open::after {
    top: 1px;
    left: 2px;
    transform: rotate(135deg);
}

.t-ico {
    flex: none;
    width: 10px;
    height: 10px;
    margin: 0 2px 0 1px;
}

.c-badge {
    width: 9px;
    height: 9px;
    margin-left: 1px;
    border-radius: 50%;
    background: radial-gradient(#3a8aa8 0 1.200px, #8fbccb 1.500px 2.400px, #3a8aa8 2.900px);
}

.menu {
    position: relative;
    flex: none;
    width: 175px;
    margin-top: 4px;
    padding-top: 3.800px;
    background: #3c3f41;
    box-shadow: 0 0 2px rgba(0, 0, 0, .5);
}

.menu.sub {
    width: 121px;
}

.item {
    display: flex;
    align-items: center;
    height: 12.800px;
    padding: 0 7px 0 5px;
    white-space: nowrap;
}

.item.active {
    background: #2f65ca;
    color: #e6e9ee;
    margin-left: 1px;
    padding-left: 4px;
}

.sub .item.active {
    margin: 0 2px 0 3px;
    padding: 0 5px 0 2px;
}

.item.off {
    color: #6f7274;
}

.ico {
    flex: none;
    width: 15px;
    display: flex;
}

.m-ico {
    width: 10px;
    height: 10px;
    margin-left: 1.500px;
}

.sub .m-ico {
    margin-left: 1px;
}

.chev {
    margin-left: auto;
    width: 4px;
    height: 4px;
    margin-right: 2px;
    border-top: 1px solid #a0a3a5;
    border-right: 1px solid #a0a3a5;
    transform: rotate(45deg);
}

.off .chev {
    border-color: #5d6062;
}

.keys {
    margin-left: auto;
    font-family: Inter, "DejaVu Sans", sans-serif;
    font-size: 7.400px;
}

.sep {
    height: 1px;
    margin: 2.250px 7px;
    background: #4e5153;
}

.hints {
    display: flex;
    flex-direction: column;
    gap: 10.200px;
    padding: 48.200px 0 0 32px;
    font-size: 8.800px;
    line-height: 11.800px;
    color: #929598;
    white-space: nowrap;
}

.hints b {
    font-weight: 400;
    margin-left: 2px;
    color: #4b8fe0;
    font-family: Inter, "DejaVu Sans", sans-serif;
}

.ide-ring {
    position: absolute;
    left: 238px;
    top: 108px;
    width: 120px;
    height: 18px;
    border: 3px solid #f00;
}

/* Select Icon screenshot, bottom left */
.shot {
    position: relative;
    height: 497px;
    padding: 22px 0 0 27px;
    background: #1c1c1c;
    font-family: Roboto, sans-serif;
    filter: blur(.25px);
}

.dim {
    width: 552px;
    height: 449px;
    display: flex;
    flex-direction: column;
    border-radius: 7px;
    background: #2b2c2d;
    border: 1px solid #333;
    overflow: hidden;
    color: #6f7071;
    font-size: 10.500px;
}

.dim-title {
    display: flex;
    align-items: center;
    gap: 6px;
    height: 22px;
    padding-left: 6px;
    border-bottom: 1px solid #262627;
}

.dim-title i {
    width: 10px;
    height: 10px;
    border-radius: 50%;
    background: #3a3b3c;
}

.dim-head {
    display: flex;
    align-items: center;
    gap: 15px;
    height: 89px;
    padding: 0 0 6px 16px;
    background: #2f2f30;
    font-size: 21px;
    color: #8f8f8f;
    white-space: nowrap;
}

.dim-logo {
    width: 46px;
    height: 46px;
    border-radius: 50%;
    background: #b4b4b4;
    filter: brightness(.72);
}

.dim-body {
    flex: 1;
    display: flex;
    justify-content: space-between;
    padding: 20px 34px 0 18px;
}

.dim-form {
    display: grid;
    grid-template-columns: 59px 1fr;
    grid-template-rows: 23px 28px 27px 28px 26px 21px 20px;
    align-items: start;
    align-content: start;
    line-height: 14px;
}

.dim-field {
    display: block;
    width: 50px;
    height: 19px;
    margin-top: -3px;
    padding-left: 4px;
    line-height: 19px;
    background: #2f3233;
    border: 1px solid #3a3c3d;
}

.dim-field.black {
    background: #000;
}

.dim-radio {
    display: block;
    width: 12px;
    height: 12px;
    margin-top: 1px;
    border: 1px solid #505152;
    border-radius: 50%;
}

.dim-check {
    grid-column: 1 / 3;
    display: flex;
    align-items: center;
    gap: 5px;
    padding-left: 2px;
    white-space: nowrap;
}

.dim-check i {
    width: 11px;
    height: 11px;
    border: 1px solid #505152;
    border-radius: 2px;
}

.dim-preview-col {
    margin-top: -1px;
    text-align: center;
    font-size: 9px;
}

.dim-preview {
    width: 202px;
    height: 202px;
    margin-bottom: 6px;
    background: conic-gradient(#858585 25%, #a3a3a3 0 50%, #858585 0 75%, #a3a3a3 0) 0 -2px / 14px 14px;
}

.dim-foot {
    display: flex;
    align-items: center;
    height: 37px;
    padding: 2px 0 0 11px;
    border-top: 1px solid #242526;
}

.dim-help {
    width: 18px;
    height: 18px;
    border-radius: 50%;
    border: 1px solid #3f4041;
    text-align: center;
    line-height: 16px;
}

.dim-next {
    margin-left: auto;
    padding: 0 8px;
    line-height: 19px;
    background: #25405f;
    color: #6f7071;
    width: 62px;
    text-align: center;
}

.dim-finish {
    width: 57px;
    margin: 0 10px;
    line-height: 17px;
    text-align: center;
    border: 1px solid #3d3e3f;
    border-radius: 2px;
    color: #555;
}

.picker {
    position: absolute;
    left: 115.700px;
    top: 29.700px;
    width: 376px;
    height: 433px;
    display: flex;
    flex-direction: column;
    border-radius: 8px;
    background: #3c3d3f;
    border: 1px solid #5a5a5b;
    box-shadow: 0 1px 6px rgba(0, 0, 0, .5);
    color: #bbb;
    font-family: Inter, sans-serif;
}

.picker-title {
    position: relative;
    flex: none;
    display: flex;
    align-items: center;
    gap: 6px;
    height: 22px;
    padding-left: 5.500px;
    border-bottom: 1px solid #4a4b4d;
}

.picker-title span {
    position: absolute;
    left: 0;
    right: 0;
    top: 3px;
    text-align: center;
    font-size: 10px;
    font-weight: 700;
    color: #a8a9aa;
}

.dot {
    width: 10px;
    height: 10px;
    border-radius: 50%;
}

.dot.red, .light.red { background: #ff5f57; }
.dot.gray, .light.gray { background: #5a5b5d; }
.dot.green, .light.green { background: #28c840; }

.picker-tools {
    flex: none;
    display: flex;
    gap: 5.500px;
    height: 19px;
    margin: 9px 11px 0 10px;
}

.search {
    width: 154.500px;
    padding: 3px 5px;
    background: #45494a;
    border: 1px solid #646464;
}

.search svg {
    display: block;
    width: 11px;
    height: 11px;
}

.combo {
    position: relative;
    padding-left: 4px;
    line-height: 17px;
    font-size: 9.500px;
    background: #3c3f41;
    border: 1px solid #5e6060;
}

.combo.filled { width: 73px; }
.combo.all { width: 114px; }

.combo i {
    position: absolute;
    right: 5px;
    top: 7px;
    border: 3.500px solid transparent;
    border-top: 4px solid #b0b0b0;
    border-bottom: 0;
}

.icon-box {
    flex: none;
    height: 316.700px;
    margin: 10px 11px 0 9px;
    overflow: hidden;
    border: 1px solid #47484a;
    border-width: 0 1px 1px;
    font-family: Roboto, sans-serif;
}

.cut-row {
    display: grid;
    grid-template-columns: repeat(6, 59.200px);
    height: 11.500px;
    overflow: hidden;
    font-size: 7.100px;
    line-height: 12px;
}

.cut-row span {
    width: 57px;
    margin-top: -4.500px;
    white-space: nowrap;
    overflow: hidden;
}

.icon-grid {
    display: grid;
    grid-template-columns: repeat(6, 59.200px);
    grid-auto-rows: 50.700px;
}

.cell {
    width: 57px;
    overflow: hidden;
    text-align: center;
}

.cell svg {
    display: block;
    width: 34px;
    height: 34px;
    margin: 0 auto;
    fill: #bbb;
}

.cell span {
    display: block;
    height: 12px;
    line-height: 12px;
    font-size: 7.100px;
    white-space: nowrap;
    overflow: hidden;
}

.cell.chosen {
    background: #3d4a55;
}

.license {
    flex: none;
    margin: 8px 0 0 10px;
    font-size: 9.300px;
    line-height: 12px;
    color: #b4b4b4;
    white-space: nowrap;
}

.license a {
    margin-left: 1px;
    color: #4b8fe0;
}

.ext {
    font-family: "DejaVu Sans", sans-serif;
    font-size: 7px;
    color: #9a9a9a;
}

.picker-buttons {
    flex: none;
    display: flex;
    justify-content: flex-end;
    align-items: center;
    gap: 9px;
    margin: 7px 11px 0 0;
}

.p-btn {
    width: 57px;
    height: 19px;
    line-height: 17px;
    text-align: center;
    font-size: 9.500px;
    background: #45494b;
    border: 1px solid #55585a;
    border-radius: 2px;
}

.p-btn.ok {
    width: 59px;
    height: 21px;
    line-height: 18px;
    background: #365880;
    border: 2px solid #46709f;
    border-radius: 3px;
    color: #d6dbe2;
}

/* Asset Studio dialog, right */
.asset {
    position: relative;
    flex: none;
    display: flex;
    flex-direction: column;
    width: 1029.500px;
    height: 850px;
    margin-top: 27px;
    overflow: hidden;
    border-radius: 0 13px 13px 0;
    border-right: 1px solid #8a8b8c;
    background: #3e3f41;
    color: #b2b3b4;
    font-family: Roboto, sans-serif;
    font-size: 19px;
    filter: blur(.2px);
}

.title-bar {
    position: relative;
    flex: none;
    display: flex;
    align-items: center;
    gap: 12px;
    height: 42px;
    margin-left: -5px;
    border-bottom: 1px solid #4a4b4c;
}

.light {
    width: 18px;
    height: 18px;
    border-radius: 50%;
}

.title-text {
    position: absolute;
    left: 5px;
    right: 16px;
    text-align: center;
    font-family: Inter, sans-serif;
    font-size: 20px;
    font-weight: 700;
    color: #a5a6a7;
}

.head {
    flex: none;
    display: flex;
    align-items: center;
    gap: 29.500px;
    height: 169px;
    padding: 0 0 12px 14.500px;
    background: #4d4d4d;
}

.logo {
    flex: none;
    width: 86px;
    height: 86px;
    border-radius: 50%;
    background: #fff;
}

.head h1 {
    margin: 4px 0 0 -1px;
    font-size: 36px;
    font-weight: 400;
    letter-spacing: -.65px;
    color: #fff;
    white-space: nowrap;
}

.body {
    flex: 1;
    display: flex;
    gap: 49px;
    padding: 36px 0 0 19px;
}

.form {
    flex: none;
    width: 510px;
    display: flex;
    flex-direction: column;
    gap: 17px;
}

.row {
    display: flex;
    align-items: center;
    height: 35px;
    white-space: nowrap;
}

.row label {
    flex: none;
    width: 112px;
}

.type-row {
    height: 30px;
    margin-bottom: -5px;
}

.name-row {
    margin-bottom: 1px;
}

.radio {
    flex: none;
    width: 22px;
    height: 22px;
    margin: 0 10px 0 -1.500px;
    border: 1.500px solid #5f6163;
    border-radius: 50%;
    background: #45494a;
}

.radio.on {
    margin-left: -2px;
    background: radial-gradient(#c4c5c6 0 3.500px, #45494a 4px);
}

.radio.second {
    margin: 0 9px 0 17px;
    background: none;
}

.field {
    display: flex;
    align-items: center;
    height: 35px;
    padding-left: 8px;
    background: #45494a;
    border: 1.500px solid #646566;
}

.name-field {
    width: 398px;
    letter-spacing: .25px;
}

.size-field {
    width: 65px;
}

.unit {
    margin: 0 9px 0 5px;
}

.unit.x {
    margin: 0 10px 0 0;
}

.color-field {
    width: 107px;
    background: #000;
    font-family: "DejaVu Sans Mono", monospace;
    font-size: 18px;
    color: #c4c4c4;
}

.clip-btn {
    width: 107px;
    height: 35px;
    display: flex;
    justify-content: center;
    align-items: center;
    background: #4a4e50;
    border: 1px solid #55585a;
    border-radius: 3px;
}

.clip-btn svg {
    width: 35px;
    height: 35px;
    fill: #bfc0c1;
}

.opacity-row {
    height: 25px;
    margin-top: 1px;
}

.slider {
    position: relative;
    width: 276px;
    height: 25px;
    margin-left: 12px;
}

.track {
    position: absolute;
    left: 0;
    right: 20px;
    top: 10px;
    height: 4.500px;
    background: #646566;
}

.thumb {
    position: absolute;
    right: 0;
    top: 0;
    width: 21.500px;
    height: 25px;
    background: #9a9b9c;
    clip-path: polygon(0 0, 100% 0, 100% 65%, 50% 100%, 0 65%);
    border-radius: 2px;
}

.percent {
    margin-left: 27px;
}

.check-row {
    height: 21px;
    padding-left: 4px;
    letter-spacing: -.17px;
}

.check {
    flex: none;
    width: 21px;
    height: 21px;
    margin-right: 9px;
    background: #45494a;
    border: 1.500px solid #606263;
    border-radius: 3px;
}

.preview-col {
    flex: none;
    text-align: center;
}

.preview {
    width: 384.500px;
    height: 384px;
    background: conic-gradient(#dedede 25%, #fff 0 50%, #dedede 0 75%, #fff 0) 0 -2px / 24px 24px;
    border: 1px solid #2d2e2f;
}

.preview-art {
    display: block;
    width: 100%;
    height: 100%;
    fill: #000;
}

.caption {
    margin-top: 9px;
    line-height: 24px;
}

.footer {
    flex: none;
    display: flex;
    align-items: center;
    justify-content: space-between;
    height: 70px;
    padding: 2px 22px 0 5px;
    border-top: 1px solid #313233;
}

.help {
    width: 34px;
    height: 34px;
    border-radius: 50%;
    text-align: center;
    line-height: 32px;
    font-size: 22px;
    font-weight: 500;
    background: #4a4e50;
    border: 1px solid #57595b;
}

.buttons {
    display: flex;
    gap: 18px;
}

.btn {
    width: 107px;
    height: 36px;
    line-height: 34px;
    text-align: center;
    background: #4a4e50;
    border: 1.500px solid #5a5c5e;
    border-radius: 3px;
}

.btn.disabled {
    width: 108px;
    background: none;
    color: #77787a;
    border-color: #545557;
}

.btn:nth-child(2) {
    width: 114px;
}

.btn.primary {
    background: #365880;
    border-color: #44709f;
    color: #d6dbe2;
    box-shadow: 0 0 0 3px #44699a;
    border-radius: 4px;
}

.callout {
    position: absolute;
    left: 268px;
    top: 178px;
    font-size: 32px;
    line-height: 40px;
    font-weight: 500;
    word-spacing: -3px;
    color: #f00;
    white-space: nowrap;
    font-family: "Noto Sans CJK SC", sans-serif;
}

.callout span {
    letter-spacing: -1.200px;
}

.clip-ring {
    position: absolute;
    left: 9.500px;
    top: 334.500px;
    width: 255px;
    height: 48px;
    border: 5px solid #f00;
    border-radius: 15px;
}

.arrow {
    position: absolute;
    left: 0;
    top: 0;
    width: 1029px;
    height: 850px;
    pointer-events: none;
}
```
